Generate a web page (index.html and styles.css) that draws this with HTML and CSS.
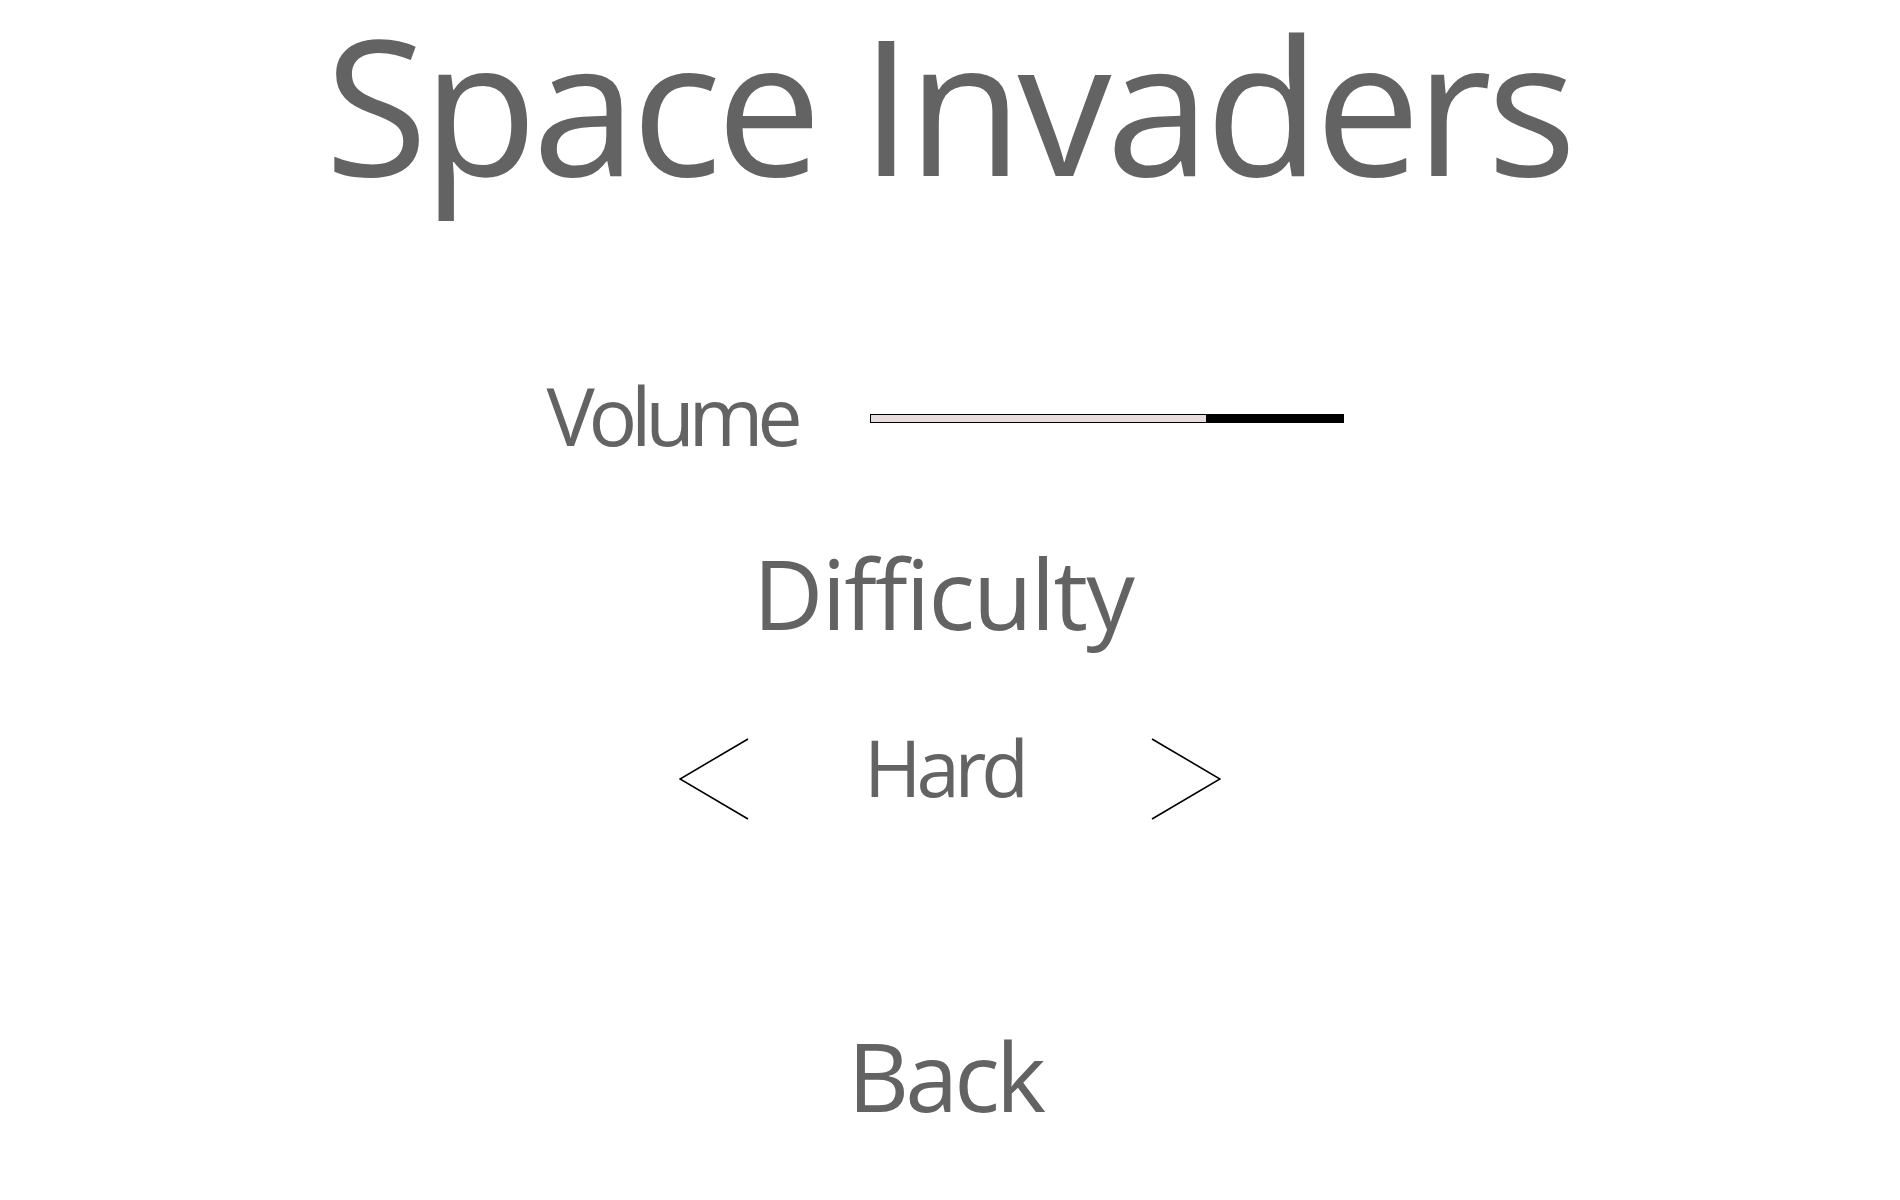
FILE: index.html
```html
<!DOCTYPE html>
<html lang="en">
<head>
<meta charset="utf-8">
<title>Space Invaders - Options</title>
<link rel="stylesheet" href="styles.css">
</head>
<body>
<main class="menu">
  <h1 class="title">Space Invaders</h1>
  <div class="volume-row">
    <span class="label volume-label">Volume</span>
    <div class="slider"><div class="slider-fill" style="width: 71%"></div></div>
  </div>
  <div class="label difficulty-label">Difficulty</div>
  <div class="hard-row">
    <svg class="arrow" width="70" height="82" viewBox="0 0 70 82"><polyline points="69,1 1,41 69,81" fill="none" stroke="#000" stroke-width="1.6"/></svg>
    <span class="label hard-label">Hard</span>
    <svg class="arrow" width="70" height="82" viewBox="0 0 70 82"><polyline points="1,1 69,41 1,81" fill="none" stroke="#000" stroke-width="1.6"/></svg>
  </div>
  <div class="label back-label">Back</div>
</main>
</body>
</html>
```
FILE: styles.css
```css
html, body {
  margin: 0;
  padding: 0;
  background: #ffffff;
}
body {
  width: 1900px;
  height: 1200px;
  overflow: hidden;
  font-family: "Open Sans", "Noto Sans", sans-serif;
  color: #636363;
}
.menu {
  display: flex;
  flex-direction: column;
  align-items: center;
}
.title {
  margin: 0;
  padding: 0 20px 0 16px;
  font-size: 188px;
  font-weight: 400;
  line-height: 1.1;
  letter-spacing: -0.028em;
  white-space: nowrap;
}
.label {
  line-height: 1;
  white-space: nowrap;
}
.volume-row {
  margin: 167px 10px 0 0;
  display: flex;
  align-items: flex-start;
  gap: 73px;
}
.volume-label {
  font-size: 81px;
  letter-spacing: -0.077em;
}
.slider {
  margin-top: 40px;
  width: 474px;
  height: 9px;
  box-sizing: border-box;
  border: 1.5px solid #000;
  background: #000;
  display: flex;
}
.slider-fill {
  height: 100%;
  background: #e8dcdc;
}
.difficulty-label {
  margin: 89px 14px 0 0;
  font-size: 97px;
  letter-spacing: -0.019em;
}
.hard-row {
  margin-top: 87px;
  display: flex;
  align-items: flex-start;
}
.arrow {
  margin-top: 10px;
  display: block;
}
.hard-label {
  margin: 0 127px 0 115px;
  font-size: 78px;
  letter-spacing: -0.066em;
}
.back-label {
  margin: 208px 10px 0 0;
  font-size: 95px;
  letter-spacing: -0.04em;
}
```
